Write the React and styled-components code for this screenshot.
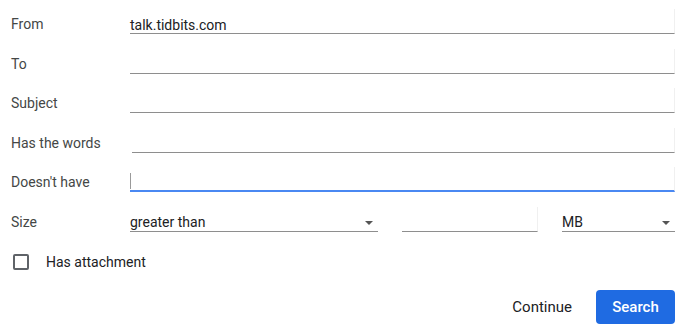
import React from 'react';
import styled, { createGlobalStyle, css } from 'styled-components';

const GlobalStyle = createGlobalStyle`
  html, body {
    margin: 0;
    padding: 0;
    background: #fff;
  }
  body {
    font-family: Roboto, "Liberation Sans", Arial, sans-serif;
    -webkit-font-smoothing: antialiased;
  }
`;

const Panel = styled.div`
  width: 690px;
  height: 336px;
  box-sizing: border-box;
  padding: 0 15px 0 11px;
  background: #fff;
`;

const Row = styled.div`
  display: grid;
  grid-template-columns: ${(p) => (p.$wide ? '121px' : '119px')} 1fr;
  align-items: end;
  height: 39.6px;
  box-sizing: border-box;
  &:first-child {
    height: 34px;
  }
`;

const Label = styled.div`
  font-size: 14px;
  line-height: 18px;
  padding-bottom: 1px;
  color: #444746;
  white-space: nowrap;
`;

const focusedLine = css`
  height: 17px;
  border-bottom: 2px solid #4a88f2;

  &::after {
    content: '';
    position: absolute;
    left: 0;
    bottom: 1px;
    width: 1px;
    height: 16px;
    background: #9a9a9a;
  }
`;

const Field = styled.div`
  position: relative;
  height: 18px;
  padding-top: 6px;
  font-size: 14px;
  line-height: 20px;
  color: #202124;
  border-bottom: 1px solid #8e8e8e;
  border-right: 1px solid #f0f0f0;
  ${(p) => p.$focused && focusedLine}
`;

const SizeGrid = styled.div`
  display: grid;
  grid-template-columns: 248px 136px 113px;
  column-gap: 24px;
  align-items: end;
`;

const Select = styled(Field)`
  display: flex;
  align-items: center;
  justify-content: space-between;
  padding-right: 5px;
  border-right: none;
`;

const Caret = styled.span`
  width: 0;
  height: 0;
  margin-top: 2px;
  border-left: 4.5px solid transparent;
  border-right: 4.5px solid transparent;
  border-top: 4.5px solid #555;
`;

const CheckRow = styled.label`
  display: flex;
  align-items: center;
  gap: 17px;
  margin-top: 22px;
  padding-left: 2px;
  font-size: 14px;
  color: #202124;
  line-height: 16px;
`;

const Box = styled.span`
  width: 12px;
  height: 12px;
  border: 2px solid #5f6368;
  border-radius: 2px;
`;

const Actions = styled.div`
  display: flex;
  justify-content: flex-end;
  align-items: center;
  gap: 24px;
  margin-top: 20px;
`;

const TextButton = styled.button`
  border: none;
  background: none;
  padding: 0;
  font-family: inherit;
  font-size: 15px;
  color: #202124;
  cursor: pointer;
`;

const PrimaryButton = styled.button`
  width: 79px;
  height: 34px;
  border: none;
  border-radius: 4px;
  background: #1f6be2;
  color: #fff;
  font-family: inherit;
  font-size: 15px;
  font-weight: 500;
  cursor: pointer;
`;

const fields = [
  { label: 'From', value: 'talk.tidbits.com' },
  { label: 'To', value: '' },
  { label: 'Subject', value: '' },
  { label: 'Has the words', value: '', wide: true },
  { label: "Doesn't have", value: '', focused: true },
];

export default function App() {
  return (
    <Panel>
      <GlobalStyle />
      {fields.map((f) => (
        <Row key={f.label} $wide={f.wide}>
          <Label>{f.label}</Label>
          <Field $focused={f.focused}>{f.value}</Field>
        </Row>
      ))}
      <Row>
        <Label>Size</Label>
        <SizeGrid>
          <Select>
            greater than
            <Caret />
          </Select>
          <Field />
          <Select>
            MB
            <Caret />
          </Select>
        </SizeGrid>
      </Row>
      <CheckRow>
        <Box />
        Has attachment
      </CheckRow>
      <Actions>
        <TextButton>Continue</TextButton>
        <PrimaryButton>Search</PrimaryButton>
      </Actions>
    </Panel>
  );
}
